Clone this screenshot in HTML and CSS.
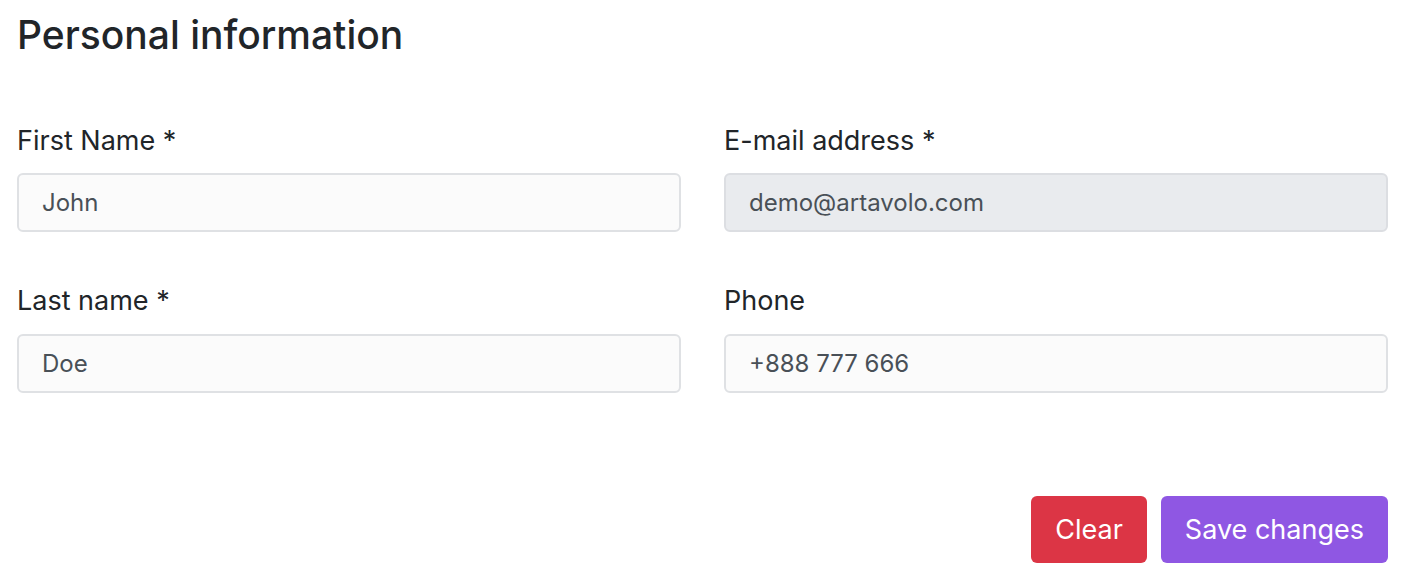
FILE: index.html
```html
<!DOCTYPE html>
<html lang="en">
<head>
    <meta charset="UTF-8">
    <meta name="viewport" content="width=device-width, initial-scale=1.0">
    <title>Personal information</title>
    <link rel="stylesheet" href="styles.css">
</head>
<body>

    <form id="profileForm" class="profile-form">
        <h1>Personal information</h1>

        <div class="form-grid">
            <div class="form-group">
                <label for="firstName">First Name *</label>
                <input type="text" id="firstName" name="firstName" value="John" required>
            </div>
            <div class="form-group">
                <label for="email">E-mail address *</label>
                <input type="text" id="email" name="email" value="demo@artavolo.com" disabled>
            </div>
            <div class="form-group">
                <label for="lastName">Last name *</label>
                <input type="text" id="lastName" name="lastName" value="Doe" required>
            </div>
            <div class="form-group">
                <label for="phone">Phone</label>
                <input type="text" id="phone" name="phone" value="+888 777 666">
            </div>
        </div>

        <div class="form-actions">
            <button type="reset" class="btn btn-danger">Clear</button>
            <button type="submit" class="btn btn-primary">Save changes</button>
        </div>
    </form>

</body>
</html>
```

FILE: styles.css
```css
body {
    margin: 0;
    font-family: Inter, "Noto Sans", sans-serif;
    color: #212529;
    background-color: #fff;
}
.profile-form {
    padding: 12px 22px 0 17px;
}
h1 {
    margin: 0 0 62px;
    font-size: 39px;
    font-weight: 500;
    line-height: 1.2;
}
.form-grid {
    display: grid;
    grid-template-columns: 1fr 1fr;
    column-gap: 43px;
    row-gap: 49px;
}
label {
    display: block;
    font-size: 27px;
    line-height: 1.5;
    margin-bottom: 12px;
}
input[type="text"] {
    width: 100%;
    height: 59px;
    padding: 0 23px;
    font-family: inherit;
    font-size: 24px;
    color: #495057;
    background-color: #fbfbfb;
    border: 2px solid #dfe1e4;
    border-radius: 6px;
    box-sizing: border-box; /* keep width inside the column */
}
input[type="text"]:disabled {
    background-color: #e9ebee;
    border-color: #dcdee2;
    color: #495057;
}
.form-actions {
    display: flex;
    justify-content: flex-end;
    gap: 14px;
    margin-top: 103px;
}
.btn {
    height: 67px;
    padding: 0 24px;
    font-family: inherit;
    font-size: 27px;
    color: white;
    border: none;
    border-radius: 6px;
    cursor: pointer;
}
.btn-danger {
    background-color: #dc3545;
}
.btn-primary {
    background-color: #8f57e3;
}
```
